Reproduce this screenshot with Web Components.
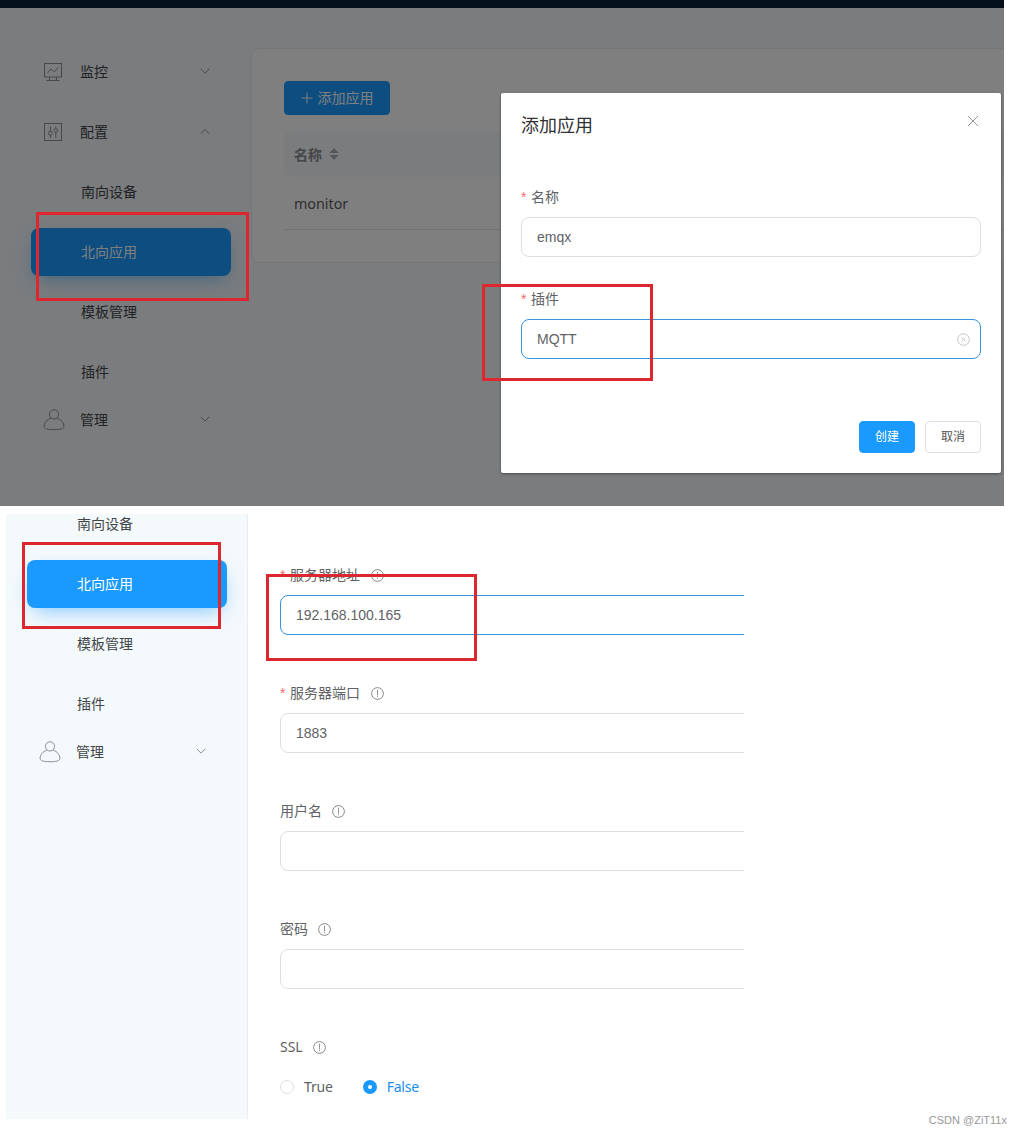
<!DOCTYPE html>
<html lang="zh-CN">
<head>
<meta charset="utf-8">
<title>Neuron</title>
<style>
body{margin:0;background:#fff;width:1022px;height:1134px;overflow:hidden;font-family:"Noto Sans","Noto Sans CJK SC",sans-serif;font-size:14px;color:#424548}
</style>
</head>
<body>
<tutorial-page></tutorial-page>
<script>
const define=(name,css,html,setup)=>{
  const t=document.createElement('template');
  t.innerHTML='<style>*{box-sizing:border-box}'+css+'</style>'+html;
  customElements.define(name,class extends HTMLElement{
    connectedCallback(){
      if(this.shadowRoot)return;
      const r=this.attachShadow({mode:'open'});
      r.append(t.content.cloneNode(true));
      if(setup)setup(this,r);
    }
  });
};
const ICONS={
  monitor:['20','<rect x="1.5" y="1.5" width="17" height="13.5"/><path d="M4.5 11l3.5-4.2 3 3 4.5-4.5M6.5 15v3.5M13.5 15v3.5M3.5 18.5h13"/>'],
  config:['20','<rect x="1.5" y="1.5" width="17" height="17"/><path d="M7.5 4.5v5M7.5 13v2.8M12.8 4.5v2.2M12.8 10.2v5.6"/><circle cx="7.3" cy="11.3" r="1.9"/><circle cx="12.8" cy="8.5" r="1.9"/>'],
  user:['22','<circle cx="11" cy="5.4" r="4.6"/><path d="M7.8 9.3C3.8 10.3 1.1 14 1.1 17.3c0 2.6 3.5 3.4 9.9 3.4s9.9-.8 9.9-3.4c0-3.3-2.7-7-6.7-8"/>'],
  down:['12','<path d="M1.8 2.8L6 7.2l4.2-4.4"/>'],
  up:['12','<path d="M1.8 7.7L6 3.3l4.2 4.4"/>'],
  close:['12','<path d="M1 1l10 10M11 1L1 11"/>'],
  plus:['12','<path d="M6 .5v11M.5 6h11"/>'],
  clear:['13','<circle cx="6.5" cy="6.5" r="5.8"/><path d="M4.7 4.7l3.6 3.6M8.3 4.7L4.7 8.3"/>'],
  info:['13','<circle cx="6.5" cy="6.5" r="5.9"/><path d="M6.5 2.7v5.8M6.5 9.2v1.1" stroke-width=".9"/>'],
  sort:['12','<path d="M6 .3L10.8 5H1.2zM6 11.7L10.8 7H1.2z" fill="currentColor" stroke="none"/>']
};
define('line-icon',':host{display:block;flex:none;line-height:0}svg{display:block}','',(el,r)=>{
  const [s,p]=ICONS[el.getAttribute('name')];
  r.innerHTML+='<svg width="'+s+'" height="'+s+'" viewBox="0 0 '+s+' '+s+'" fill="none" stroke="currentColor" stroke-width="1">'+p+'</svg>';
});
define('menu-group',`:host{display:flex;align-items:center;height:48px;padding:0 20px 0 12px}
  .i{width:24px;margin-right:13px;color:#8d9092;display:flex}span{flex:1;padding-bottom:2px}.c{color:#909396}`,
  '<div class="i"></div><span><slot></slot></span><div class="c"></div>',(el,r)=>{
  r.querySelector('.i').innerHTML='<line-icon name="'+el.getAttribute('icon')+'"></line-icon>';
  r.querySelector('.c').innerHTML='<line-icon name="'+(el.hasAttribute('open')?'up':'down')+'"></line-icon>';
});
define('menu-link',`:host{box-sizing:border-box;display:flex;align-items:center;height:48px;padding:0 0 2px 50px;margin-bottom:12px;border-radius:8px}
  :host([active]){background:#1a9aff;color:#fff;box-shadow:0 8px 20px -6px rgba(26,154,255,.55)}
  :host([last]){margin-bottom:0}`,'<slot></slot>');
define('ui-button',`:host{box-sizing:border-box;display:flex;align-items:center;justify-content:center;width:56px;height:32px;padding-bottom:2px;border-radius:4px;font-size:12px;border:1px solid #dcdfe6;color:#555;background:#fff}
  :host([primary]){background:#1a9aff;border-color:#1a9aff;color:#fff}
  :host([large]){width:106px;height:34px;font-size:14px}`,'<slot></slot>');
define('form-field',`:host{display:block}.l{display:flex;align-items:center;height:40px;color:#606266}.t{padding-bottom:2px}
  .s{color:#f56c6c;width:10px;display:none;font:14px/20px "Liberation Sans",Arial,sans-serif}:host([required]) .s{display:block}
  line-icon{margin-left:10px;color:#85878b;display:none}:host([info]) line-icon{display:block}
  :host([required][info]) line-icon{margin-left:11px}`,
  '<div class="l"><span class="s">*</span><span class="t"></span><line-icon name="info"></line-icon></div><slot></slot>',(el,r)=>{
  r.querySelector('.t').textContent=el.getAttribute('label');
});
define('text-input',`:host{box-sizing:border-box;display:flex;align-items:center;justify-content:space-between;height:40px;border:1px solid #dcdee2;border-radius:8px;padding:0 10px 0 15px;color:#606266;font-family:"Liberation Sans",Arial,sans-serif;background:#fff}
  :host([focus]){border-color:#3695dc}line-icon{color:#c0c4cc;display:none}:host([clearable]) line-icon{display:block}`,
  '<span><slot></slot></span><line-icon name="clear"></line-icon>');
define('radio-option',`:host{display:flex;align-items:center;color:#606266;padding-bottom:1px;letter-spacing:-.2px}i{width:14px;height:14px;border-radius:50%;border:1px solid #dcdfe6;margin:1px 10px 0 0}
  :host([checked]){color:#1a8cee}:host([checked]) i{border:5px solid #1a9aff}`,'<i></i><slot></slot>');
define('red-frame',':host{box-sizing:border-box;display:block;position:absolute;border:3px solid #dc272e;z-index:5}','');
define('app-list',`:host{box-sizing:border-box;display:block;background:#fff;border:1px solid #e9eef2;border-right:0;border-radius:8px 0 0 8px;height:215px;padding:32px 0 0 32px}
  .p{margin:2px 5px 0 0}.h{display:flex;align-items:center;height:46px;margin-top:16px;padding-left:10px;background:#f4f9fc;border-radius:8px 0 0 8px;color:#888c92;font-weight:700}
  .h line-icon{margin-left:6px;color:#a9acb1}.r{height:53px;line-height:53px;padding-left:10px;border-bottom:1px solid #e4e7ec;color:#5a5d60;font-size:14.3px}`,
  `<ui-button primary large><line-icon class="p" name="plus"></line-icon>添加应用</ui-button>
  <div class="h">名称<line-icon name="sort"></line-icon></div><div class="r">monitor</div>`);
define('create-dialog',`:host{box-sizing:border-box;display:block;width:500px;height:380px;margin:93px 3px 0 0;background:#fff;border-radius:2px;box-shadow:0 1px 3px rgba(0,0,0,.4);padding:20px}
  header{display:flex;justify-content:space-between;height:24px;margin-bottom:40px;font-size:18px;line-height:25px;color:#303133}
  header line-icon{margin:2px 2px 0 0;color:#909399}form-field{margin-bottom:22px}footer{display:flex;justify-content:flex-end;gap:10px;margin-top:62px}`,
  `<header>添加应用<line-icon name="close"></line-icon></header>
  <form-field label="名称" required><text-input>emqx</text-input></form-field>
  <form-field label="插件" required><text-input focus clearable>MQTT</text-input></form-field>
  <footer><ui-button primary>创建</ui-button><ui-button>取消</ui-button></footer>`);
define('top-shot',`:host{display:block;position:relative;width:1004px;height:506px;background:#f4f9fc;overflow:hidden}
  .bar{height:8px;background:#0a2234}.row{display:flex}nav{width:200px;margin:40px 20px 0 31px;flex:none}
  nav>menu-group{margin-bottom:12px}nav>menu-group:last-child{margin:0}app-list{flex:1;margin-top:40px}
  .mask{position:absolute;inset:0;background:rgba(0,0,0,.5);display:flex;justify-content:flex-end;align-items:flex-start}`,
  `<div class="bar"></div><div class="row"><nav>
  <menu-group icon="monitor">监控</menu-group><menu-group icon="config" open>配置</menu-group>
  <menu-link>南向设备</menu-link><menu-link active>北向应用</menu-link><menu-link>模板管理</menu-link><menu-link last>插件</menu-link>
  <menu-group icon="user">管理</menu-group></nav><app-list></app-list></div>
  <div class="mask"><create-dialog></create-dialog></div>`);
define('bottom-shot',`:host{display:flex;height:605px;margin:8px 0 0 6px;width:738px;overflow:hidden}
  nav{width:242px;background:#f4f9fc;border-right:1px solid #e6ecf0;padding:0 20px 0 21px;flex:none;overflow:hidden}
  .in{margin-top:-14px}form{display:block;flex:none;width:560px;padding:41px 0 0 32px}
  form-field{margin-bottom:38px}.rs{display:flex;gap:30px;height:40px}`,
  `<nav><div class="in"><menu-link>南向设备</menu-link><menu-link active>北向应用</menu-link><menu-link>模板管理</menu-link><menu-link last>插件</menu-link>
  <menu-group icon="user">管理</menu-group></div></nav>
  <form><form-field label="服务器地址" required info><text-input focus>192.168.100.165</text-input></form-field>
  <form-field label="服务器端口" required info><text-input>1883</text-input></form-field>
  <form-field label="用户名" info><text-input></text-input></form-field>
  <form-field label="密码" info><text-input></text-input></form-field>
  <form-field label="SSL" info><div class="rs"><radio-option>True</radio-option><radio-option checked>False</radio-option></div></form-field></form>`);
define('tutorial-page',`:host{display:flex;flex-direction:column;position:relative;height:1134px}
  .mark{font:11px/14px "Liberation Sans",Arial,sans-serif;color:#999;text-align:right;padding:0 15px 0 0;margin-top:-6px}`,
  `<top-shot></top-shot><bottom-shot></bottom-shot><div class="mark">CSDN @ZiT11x</div>
  <red-frame style="left:36px;top:212px;width:213px;height:89px"></red-frame>
  <red-frame style="left:482px;top:284px;width:171px;height:97px"></red-frame>
  <red-frame style="left:22px;top:542px;width:199px;height:87px"></red-frame>
  <red-frame style="left:266px;top:574px;width:211px;height:87px"></red-frame>`);
</script>
</body>
</html>
